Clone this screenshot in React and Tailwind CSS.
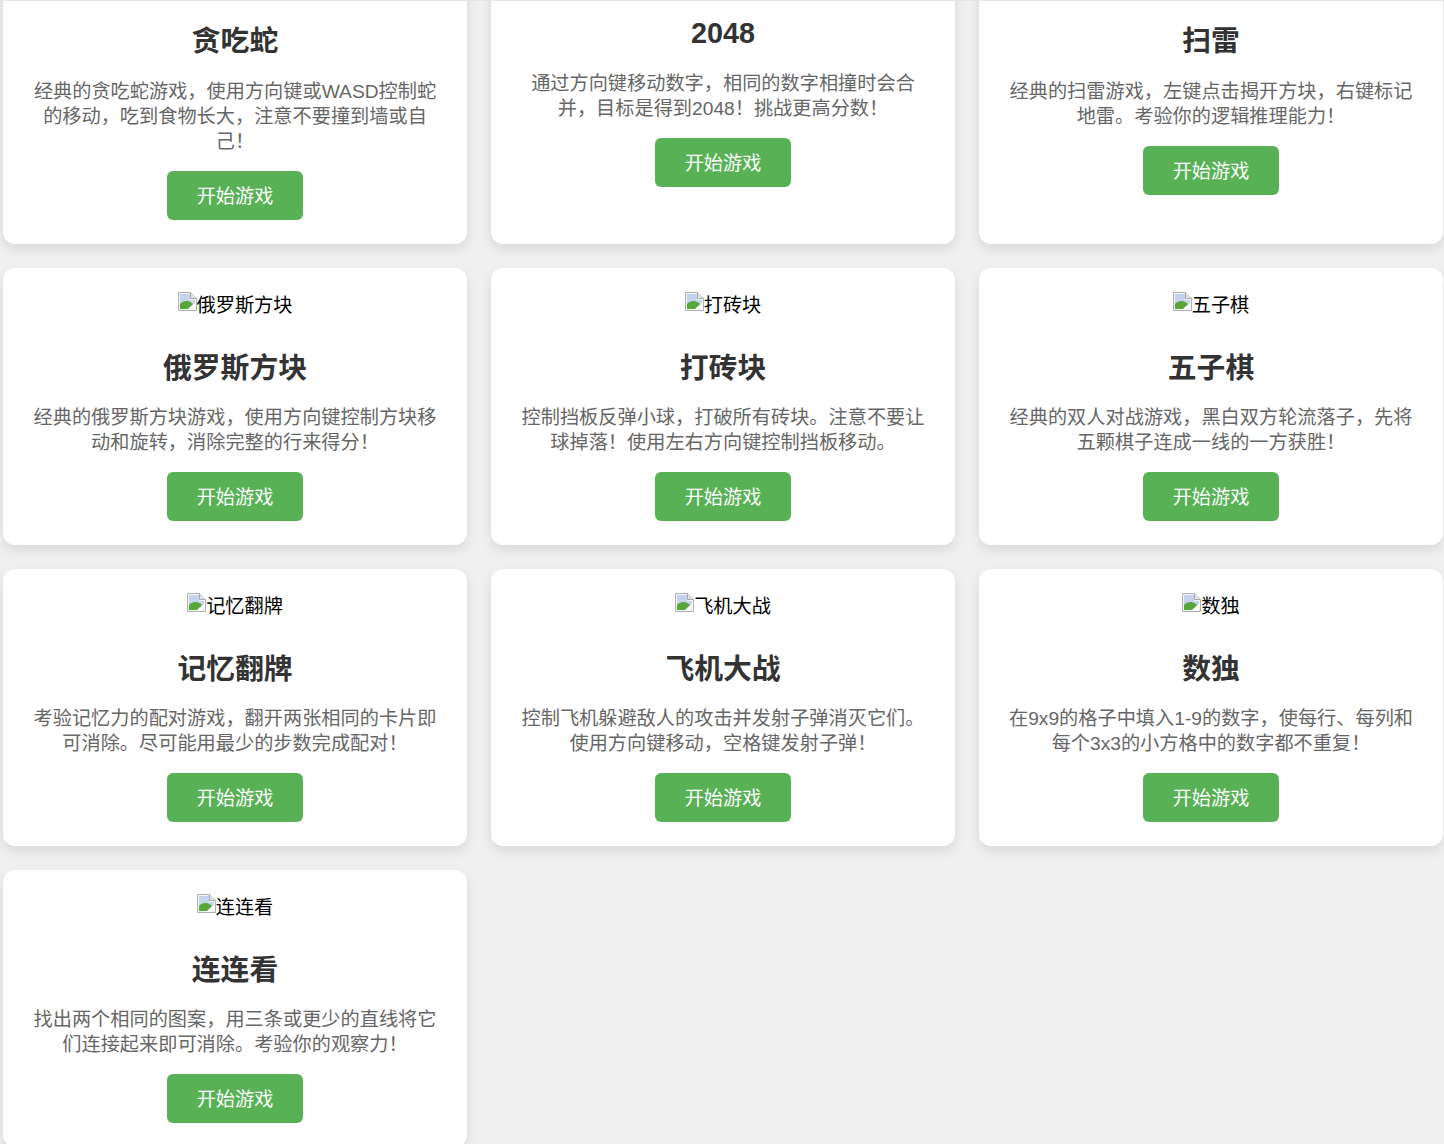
import React from 'react';

const games = [
  { name: '贪吃蛇', desc: '经典的贪吃蛇游戏，使用方向键或WASD控制蛇的移动，吃到食物长大，注意不要撞到墙或自己！' },
  { name: '2048', desc: '通过方向键移动数字，相同的数字相撞时会合并，目标是得到2048！挑战更高分数！' },
  { name: '扫雷', desc: '经典的扫雷游戏，左键点击揭开方块，右键标记地雷。考验你的逻辑推理能力！' },
  { name: '俄罗斯方块', desc: '经典的俄罗斯方块游戏，使用方向键控制方块移动和旋转，消除完整的行来得分！' },
  { name: '打砖块', desc: '控制挡板反弹小球，打破所有砖块。注意不要让球掉落！使用左右方向键控制挡板移动。' },
  { name: '五子棋', desc: '经典的双人对战游戏，黑白双方轮流落子，先将五颗棋子连成一线的一方获胜！' },
  { name: '记忆翻牌', desc: '考验记忆力的配对游戏，翻开两张相同的卡片即可消除。尽可能用最少的步数完成配对！' },
  { name: '飞机大战', desc: '控制飞机躲避敌人的攻击并发射子弹消灭它们。使用方向键移动，空格键发射子弹！' },
  { name: '数独', desc: '在9x9的格子中填入1-9的数字，使每行、每列和每个3x3的小方格中的数字都不重复！' },
  { name: '连连看', desc: '找出两个相同的图案，用三条或更少的直线将它们连接起来即可消除。考验你的观察力！' },
];

// chrome's broken image glyph, at 120% page zoom
function BrokenImage() {
  return (
    <svg width="19" height="19" viewBox="0 0 19 19" className="shrink-0">
      <path d="M0.5 0.5H12.5L18.5 6.5V18.5H0.5Z" fill="#f4f4f4" stroke="#b0b0b0" />
      <path d="M12.5 0.5V6.5H18.5" fill="#e2e2e2" stroke="#a8a8a8" />
      <path d="M2 2H12V8H17V11L14 14H2Z" fill="#c4d3ee" />
      <path d="M2 12C5 9 8 8.5 11 9.5C13 10.2 14 11 15 12L10 17H2Z" fill="#56a63a" />
      <path d="M10 18L18 10V12.5L13 18Z" fill="#fff" />
    </svg>
  );
}

function GameCard({ game, firstRow }) {
  // 2048's alt text is latin, so its image line is shorter
  const altHeight = game.name === '2048' ? 'h-[18px] overflow-hidden' : firstRow ? 'h-[26px]' : 'h-[27px]';
  return (
    <div className="bg-white rounded-[12px] p-6 text-center shadow-[0_5px_12px_rgba(0,0,0,0.1)]">
      <div className={`flex justify-center text-black leading-[28px] ${altHeight}`}>
        <BrokenImage />
        <span>{game.name}</span>
      </div>
      <h2 className="mt-[30px] text-[28.8px] leading-[38px] font-bold text-[#333]">{game.name}</h2>
      <p className={`text-[19.2px] leading-[25px] text-[#666] ${firstRow ? 'mt-[19px]' : 'mt-[18px]'}`}>{game.desc}</p>
      <button type="button" className="mt-[17px] w-[136px] h-[49px] pt-[3px] rounded-[6px] bg-[#59b156] text-white text-[19.2px]">
        开始游戏
      </button>
    </div>
  );
}

export default function App() {
  return (
    <div className="h-[1144px] overflow-hidden border-t border-[#e5e5e5] bg-[#f0f0f0] text-[19.2px] font-['Liberation_Sans','Noto_Sans_CJK_SC',sans-serif]">
      <div className="grid grid-cols-3 gap-6 -mt-[59px] pl-[3px] pr-px">
        {games.map((game, i) => (
          <GameCard key={game.name} game={game} firstRow={i < 3} />
        ))}
      </div>
    </div>
  );
}
